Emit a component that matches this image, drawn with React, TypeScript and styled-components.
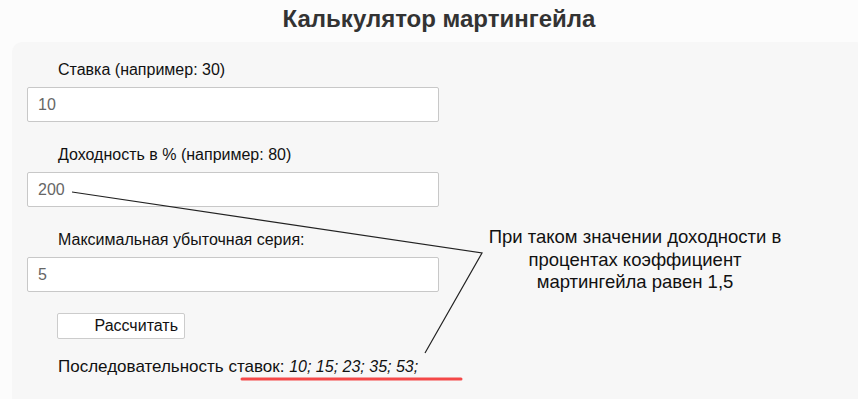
import React from 'react';
import styled, { createGlobalStyle } from 'styled-components';

const GlobalStyle = createGlobalStyle`
  html, body {
    margin: 0;
    padding: 0;
    background: #fcfcfc;
    overflow: hidden;
  }
  body {
    font-family: 'Liberation Sans', Arial, sans-serif;
    color: #111;
  }
`;

const Page = styled.div`
  position: relative;
  width: 858px;
  height: 399px;
  overflow: hidden;
`;

const Wrapper = styled.div`
  margin-left: 12px;
  width: 854px;
`;

const Title = styled.h1`
  margin: 0;
  padding-top: 5px;
  height: 37px;
  font-size: 24px;
  line-height: 28px;
  font-weight: bold;
  color: #333;
  text-align: center;
`;

const Panel = styled.div`
  background: #f7f7f7;
  border-radius: 10px;
  padding: 19px 0 40px 15px;
`;

const Field = styled.div`
  display: flex;
  flex-direction: column;
  gap: 8px;
  margin-bottom: 24px;
`;

const Label = styled.label`
  margin-left: 31px;
  font-size: 16px;
  line-height: 18px;
  color: #111;
`;

const Input = styled.input`
  box-sizing: border-box;
  width: 412px;
  height: 35px;
  padding: 0 10px;
  border: 1px solid #c8c8c8;
  border-radius: 2px;
  background: #fff;
  font-family: 'Liberation Sans', Arial, sans-serif;
  font-size: 16px;
  color: #666;
  outline: none;
`;

const Button = styled.button`
  box-sizing: border-box;
  margin: -3px 0 0 30px;
  width: 128px;
  height: 26px;
  padding: 0 6px 0 0;
  text-align: right;
  background: #fff;
  border: 1px solid #ccc;
  border-radius: 2px;
  font-family: 'Liberation Sans', Arial, sans-serif;
  font-size: 16px;
  color: #111;
`;

const Result = styled.div`
  margin: 19px 0 0 31px;
  font-size: 17px;
  line-height: 18px;
  color: #111;
`;

const Sequence = styled.em`
  font-style: italic;
  font-size: 16px;
`;

const Callout = styled.div`
  position: absolute;
  left: 482px;
  top: 226px;
  width: 306px;
  font-size: 18.5px;
  line-height: 22.5px;
  text-align: center;
  color: #111;
`;

const Overlay = styled.svg`
  position: absolute;
  left: 0;
  top: 0;
  pointer-events: none;
`;

const fields = [
  { label: 'Ставка (например: 30)', value: '10' },
  { label: 'Доходность в % (например: 80)', value: '200' },
  { label: 'Максимальная убыточная серия:', value: '5' },
];

export default function App() {
  return (
    <Page>
      <GlobalStyle />
      <Wrapper>
        <Title>Калькулятор мартингейла</Title>
        <Panel>
          {fields.map((f) => (
            <Field key={f.label}>
              <Label>{f.label}</Label>
              <Input type="text" defaultValue={f.value} />
            </Field>
          ))}
          <Button>Рассчитать</Button>
          <Result>
            Последовательность ставок: <Sequence>10; 15; 23; 35; 53;</Sequence>
          </Result>
        </Panel>
      </Wrapper>
      <Callout>
        При таком значении доходности в процентах коэффициент мартингейла равен 1,5
      </Callout>
      <Overlay width="858" height="399" viewBox="0 0 858 399">
        <polyline points="72,192 482,253 425,353" fill="none" stroke="#222" strokeWidth="1.2" />
        <line x1="242" y1="379" x2="461" y2="379" stroke="#f44848" strokeWidth="3" strokeLinecap="round" />
      </Overlay>
    </Page>
  );
}
